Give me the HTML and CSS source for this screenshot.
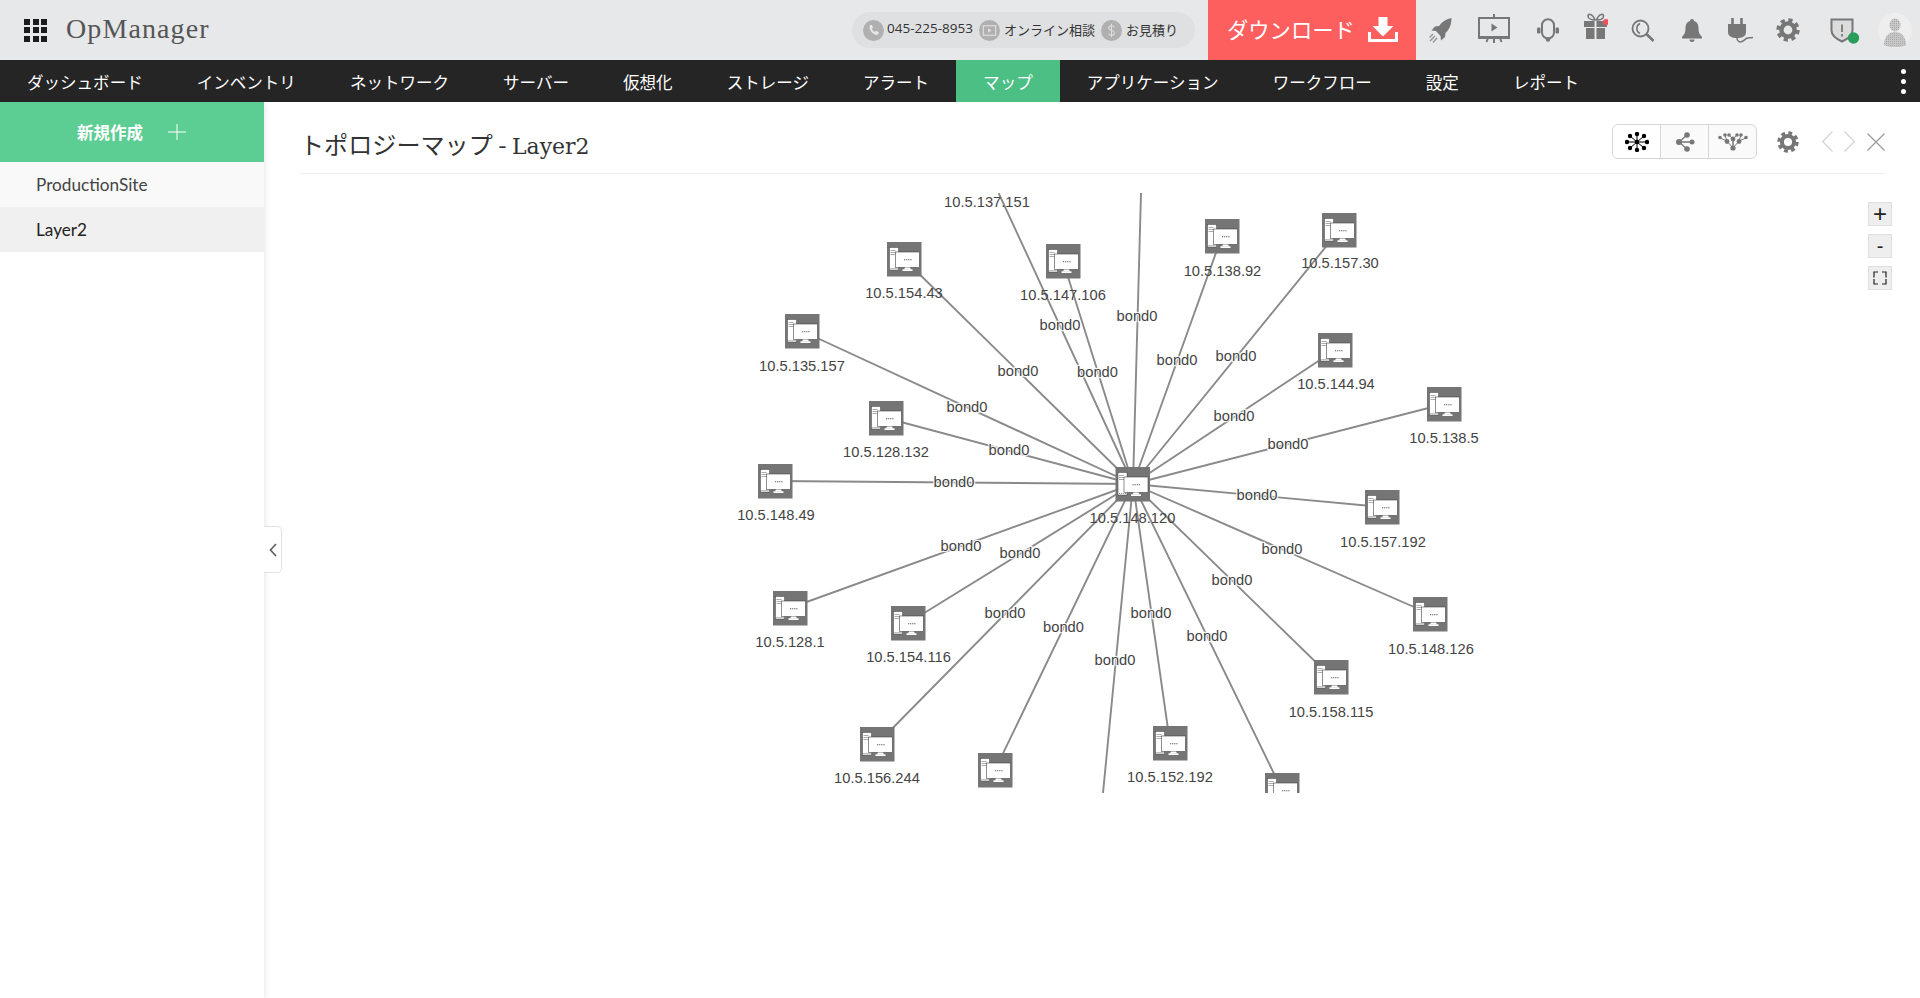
FILE: index.html
```html
<!DOCTYPE html>
<html lang="ja">
<head>
<meta charset="utf-8">
<title>OpManager</title>
<link rel="stylesheet" href="styles.css">
</head>
<body>
<svg class="defs" width="0" height="0" aria-hidden="true">
  <defs>
    <g id="node">
      <rect width="34.5" height="34.5" fill="#757575"/>
      <rect x="2.5" y="5.5" width="9" height="22.5" fill="#fff" stroke="#444" stroke-width=".5"/>
      <path d="M3.5 8.5h5M3.5 10.5h5M3.5 12.5h5" stroke="#888" stroke-width=".7"/>
      <path d="M3.5 26.5h7" stroke="#666" stroke-width=".8" stroke-dasharray="1 1"/>
      <rect x="8.5" y="10" width="24" height="15.5" fill="#fff" stroke="#444" stroke-width=".6"/>
      <path d="M18 25.5h5l1 2h-7z" fill="#fff"/>
      <rect x="15.5" y="27.3" width="10" height="1.7" fill="#fff"/>
      <path d="M17 17.7h7.5" stroke="#555" stroke-width="1.1" stroke-dasharray="1.2 .9"/>
    </g>
    <g id="gear">
      <circle cx="12" cy="12" r="6.6" fill="none" stroke="currentColor" stroke-width="4.4"/>
      <circle cx="12" cy="12" r="9.9" fill="none" stroke="currentColor" stroke-width="3.6" stroke-dasharray="4.2 3.58"/>
    </g>
  </defs>
</svg>

<header class="topbar">
  <div class="brand">
    <div class="apps"><i></i><i></i><i></i><i></i><i></i><i></i><i></i><i></i><i></i></div>
    <span class="logo">OpManager</span>
  </div>
  <div class="contact">
    <span class="contact-item">
      <svg class="contact-ic" viewBox="0 0 22 22"><circle cx="11" cy="11" r="11" fill="#b0b0b0"/><path d="M7 5.5l2.2-.6 1.4 3-1.3 1.2c.6 1.5 1.8 2.8 3.3 3.4l1.2-1.2 2.8 1.5-.7 2.2c-.4.7-1.2 1-2 .8-3.5-.9-6.3-3.7-7-7.4-.2-.9 0-1.7.1-2.4z" fill="#e6e6e6"/></svg>
      <span class="contact-text num">045-225-8953</span>
    </span>
    <span class="contact-item">
      <svg class="contact-ic" viewBox="0 0 22 22"><circle cx="11" cy="11" r="11" fill="#b0b0b0"/><rect x="4.5" y="6" width="13" height="10" fill="none" stroke="#e0e0e0" stroke-width="1.2"/><path d="M9.5 8.7l3.5 2.3-3.5 2.3z" fill="#e0e0e0"/></svg>
      <span class="contact-text">オンライン相談</span>
    </span>
    <span class="contact-item">
      <svg class="contact-ic" viewBox="0 0 22 22"><circle cx="11" cy="11" r="11" fill="#b0b0b0"/><path d="M14 7.5c-.6-1-1.7-1.4-3-1.4-1.6 0-2.9.8-2.900 2.400 0 3.200 6 1.800 6 5 0 1.600-1.400 2.400-3.100 2.400-1.400 0-2.600-.5-3.200-1.600M11 4v14" fill="none" stroke="#e0e0e0" stroke-width="1.1"/></svg>
      <span class="contact-text">お見積り</span>
    </span>
  </div>
  <a class="download">
    <span class="download-text">ダウンロード</span>
    <svg class="download-ic" viewBox="0 0 30 25"><path d="M10.5 0h9v9h6L15 19.5 4.5 9h6z" fill="#fff"/><path d="M1.5 15v8.5h27V15" fill="none" stroke="#fff" stroke-width="3"/></svg>
  </a>
  <div class="tools">
    <svg class="i-rocket" viewBox="0 0 23 25"><path d="M22.5 0c-5 1-9.500 3.500-12.500 8L6 8.500 2.500 12.500l4.500.5 4.500 5 .5 4.500 4-3.500.5-4c4-3.500 6-9 6-15z" fill="#777"/><path d="M1 23l5-5M4 24.500l4-4.500M.5 19.500l3.500-3.500" stroke="#999" stroke-width="1.5"/></svg>
    <svg class="i-screen" viewBox="0 0 32 29"><path d="M16 0v4" stroke="#777" stroke-width="2"/><rect x="1" y="4" width="30" height="19" fill="none" stroke="#777" stroke-width="2"/><path d="M0 24h32M10 24l-1.500 4M16 24v5M22 24l1.500 4" stroke="#777" stroke-width="2"/><path d="M13.5 9.500l6 4-6 4z" fill="#777"/></svg>
    <svg class="i-headset" viewBox="0 0 22 24"><rect x="5" y="1.2" width="12" height="19.3" rx="6" fill="none" stroke="#777" stroke-width="2"/><rect x="0" y="9.500" width="3.500" height="6" rx="1.2" fill="#777"/><rect x="18.500" y="9.500" width="3.500" height="6" rx="1.2" fill="#777"/><circle cx="11" cy="21.500" r="2.200" fill="#777"/></svg>
    <svg class="i-gift" viewBox="0 0 24 26"><path d="M11 7C8 7 4 6 4 3c0-3 5-2 7 4zM12.5 7c3 0 7-1 7-4 0-3-5-2-7 4z" fill="none" stroke="#777" stroke-width="1.6"/><rect x="0" y="8" width="23" height="6" fill="#777"/><rect x="2" y="15" width="19" height="11" fill="#777"/><path d="M11.5 8v18" stroke="#e6e8ea" stroke-width="2"/><circle cx="22" cy="9" r="3" fill="#f0505a"/></svg>
    <svg class="i-search" viewBox="0 0 24 23"><circle cx="9.5" cy="9.500" r="8" fill="none" stroke="#777" stroke-width="1.8"/><path d="M9 4.500a5.500 5.500 0 0 0 0 10" fill="none" stroke="#777" stroke-width="1.5"/><path d="M15.5 15l7 7" stroke="#777" stroke-width="2.6"/></svg>
    <svg class="i-bell" viewBox="0 0 20 23"><path d="M10 0c1.200 0 2 .8 2 2 3.500 1 4.500 4 4.500 7.500 0 3.500 1 6 3.500 8.500v1.500H0V18c2.500-2.500 3.500-5 3.500-8.500C3.500 6 4.500 3 8 2c0-1.200.8-2 2-2z" fill="#777"/><path d="M7.5 20.500h5a2.500 2.500 0 0 1-5 0z" fill="#777"/></svg>
    <svg class="i-plug" viewBox="0 0 25 25"><path d="M4.5 0v6M13.500 0v6" stroke="#777" stroke-width="2.6"/><path d="M0 6h18v8c0 4-3.500 6-9 6s-9-2-9-6z" fill="#777"/><path d="M9 20c0 3.500 2.500 4.500 5 3.500s3.500-3 5.500-3.500 3.500-.2 5.500-.5" fill="none" stroke="#777" stroke-width="1.5"/></svg>
    <svg class="i-gear" viewBox="0 0 24 24"><use href="#gear"/></svg>
    <svg class="i-shield" viewBox="0 0 30 27"><path d="M1.5 1.500h21v11c0 5-4 8-10.500 11C5.500 20.500 1.500 17.500 1.500 12.500z" fill="#dcdcdc" stroke="#777" stroke-width="2"/><path d="M12 6.500v7.500M12 16v2.500" stroke="#666" stroke-width="1.5"/><circle cx="23.5" cy="20" r="5.7" fill="#2a9d5c"/></svg>
    <svg class="i-avatar" viewBox="0 0 34 34"><defs><pattern id="dots" width="2" height="2" patternUnits="userSpaceOnUse"><rect width="2" height="2" fill="#c8c8c8"/><rect width="1" height="1" fill="#a8a8a8"/></pattern></defs><circle cx="17" cy="17" r="17" fill="#eeeeee"/><ellipse cx="17" cy="12" rx="5.5" ry="6.5" fill="url(#dots)"/><path d="M6 32c0-9 5-13 11-13s11 4 11 13c-6 3-16 3-22 0z" fill="url(#dots)"/></svg>
  </div>
</header>

<nav class="navbar">
  <a class="nav-item">ダッシュボード</a>
  <a class="nav-item">インベントリ</a>
  <a class="nav-item">ネットワーク</a>
  <a class="nav-item">サーバー</a>
  <a class="nav-item">仮想化</a>
  <a class="nav-item">ストレージ</a>
  <a class="nav-item">アラート</a>
  <a class="nav-item active">マップ</a>
  <a class="nav-item">アプリケーション</a>
  <a class="nav-item">ワークフロー</a>
  <a class="nav-item">設定</a>
  <a class="nav-item">レポート</a>
  <span class="kebab"><i></i><i></i><i></i></span>
</nav>

<div class="body">
  <aside class="sidebar">
    <div class="new-btn">
      <span>新規作成</span>
      <svg class="plus" viewBox="0 0 18 16"><path d="M9 0v16M0 8h18" stroke="#fff" stroke-width="1"/></svg>
    </div>
    <div class="side-item">ProductionSite</div>
    <div class="side-item selected">Layer2</div>
  </aside>

  <main class="main">
    <button class="collapse" aria-label="collapse">
      <svg viewBox="0 0 8 14" width="8" height="14"><path d="M7 1L1.5 7 7 13" fill="none" stroke="#666" stroke-width="1.8"/></svg>
    </button>

    <div class="titlerow">
      <h1 class="title"><span class="title-ja">トポロジーマップ - </span><span class="title-en">Layer2</span></h1>
      <div class="viewgroup">
        <span class="view">
          <svg viewBox="0 0 24 20" width="24" height="20"><path d="M12 10L12 2M12 10L5 4M12 10L19 4M12 10L5 16M12 10L19 16M12 10L2 10M12 10L22 10M12 10L12 18" stroke="#000" stroke-width="1"/><g fill="#000"><circle cx="12" cy="2" r="2.2"/><circle cx="12" cy="18" r="2.2"/><circle cx="5" cy="4" r="2.2"/><circle cx="19" cy="4" r="2.2"/><circle cx="5" cy="16" r="2.2"/><circle cx="19" cy="16" r="2.2"/><circle cx="2" cy="10" r="2.2"/><circle cx="22" cy="10" r="2.2"/><circle cx="12" cy="10" r="2.2"/></g></svg>
        </span>
        <span class="view">
          <svg viewBox="0 0 20 20" width="20" height="20"><path d="M4 10L12 3M4 10H17M4 10L12 17" stroke="#777" stroke-width="1.3"/><g fill="#777"><circle cx="4" cy="10" r="3"/><circle cx="12" cy="3" r="2.8"/><circle cx="17" cy="10" r="2.5"/><circle cx="12" cy="17" r="2.8"/></g></svg>
        </span>
        <span class="view">
          <svg viewBox="0 0 30 20" width="30" height="20"><path d="M15 16L9 9 2 6M15 16V7L11 3M15 16V7l4-4M15 16l6-7 7-3M9 9L7 3M21 9l2-6" stroke="#777" stroke-width="1" fill="none"/><g fill="#777"><circle cx="15" cy="16" r="2.6"/><circle cx="9" cy="9.5" r="2.4"/><circle cx="15" cy="7" r="2.4"/><circle cx="21" cy="9.5" r="2.4"/><circle cx="2" cy="5.5" r="1.8"/><circle cx="7" cy="3" r="1.8"/><circle cx="11" cy="3" r="1.8"/><circle cx="19" cy="3" r="1.8"/><circle cx="23" cy="3" r="1.8"/><circle cx="28" cy="5.5" r="1.8"/></g></svg>
        </span>
      </div>
      <svg class="set" viewBox="0 0 24 24"><use href="#gear"/></svg>
      <svg class="prev" viewBox="0 0 11 21"><path d="M10.5 .5L.7 10.5l9.800 10" fill="none" stroke="#d4d4d4" stroke-width="1.2"/></svg>
      <svg class="next" viewBox="0 0 11 21"><path d="M.5 .5l9.800 10-9.800 10" fill="none" stroke="#d4d4d4" stroke-width="1.2"/></svg>
      <svg class="close" viewBox="0 0 18 18"><path d="M.5 .5l17 17M17.5 .5l-17 17" fill="none" stroke="#999" stroke-width="1.2"/></svg>
    </div>

    <div class="zoombar">
      <span class="zoom-btn zoom-plus">+</span>
      <span class="zoom-btn">-</span>
      <span class="zoom-btn"><svg viewBox="0 0 14 14" width="14" height="14"><path d="M5 1H1v5.5M9 1h4v5.5M5 13H1V8M9 13h4V8" fill="none" stroke="#222" stroke-width="1.2"/></svg></span>
    </div>

    <svg class="graph" viewBox="264 193 1656 600" width="1656" height="600">
      <path class="edges" d="M1133 484L998.6 193M1133 484L1141 193M1133 484L904 259M1133 484L1063 261M1133 484L1222 236M1133 484L1339.5 230M1133 484L1335 350M1133 484L1444 404M1133 484L1382 507M1133 484L1430 614M1133 484L1331 677M1133 484L1282 790M1133 484L1170 743M1133 484L1103 793M1133 484L995 770M1133 484L877 744M1133 484L908 623M1133 484L790 608M1133 484L775 481M1133 484L886 418M1133 484L802 331"/>
      <g class="edge-labels">
        <text x="1060" y="330">bond0</text>
        <text x="1137" y="321">bond0</text>
        <text x="1018" y="376">bond0</text>
        <text x="1097.5" y="377">bond0</text>
        <text x="1177" y="365">bond0</text>
        <text x="1236" y="361">bond0</text>
        <text x="967" y="412">bond0</text>
        <text x="1009" y="455">bond0</text>
        <text x="1234" y="421">bond0</text>
        <text x="1288" y="449">bond0</text>
        <text x="954" y="487">bond0</text>
        <text x="1257" y="500">bond0</text>
        <text x="961" y="551">bond0</text>
        <text x="1020" y="558">bond0</text>
        <text x="1282" y="554">bond0</text>
        <text x="1232" y="585">bond0</text>
        <text x="1005" y="618">bond0</text>
        <text x="1063.5" y="632">bond0</text>
        <text x="1151" y="618">bond0</text>
        <text x="1115" y="665">bond0</text>
        <text x="1207" y="641">bond0</text>
      </g>
      <use href="#node" x="1115.5" y="467"/>
      <use href="#node" x="887" y="242"/>
      <use href="#node" x="1046" y="244"/>
      <use href="#node" x="1205" y="219"/>
      <use href="#node" x="1322" y="213"/>
      <use href="#node" x="1318" y="333"/>
      <use href="#node" x="1427" y="387"/>
      <use href="#node" x="1365" y="490"/>
      <use href="#node" x="1413" y="597"/>
      <use href="#node" x="1314" y="660"/>
      <use href="#node" x="1265" y="773"/>
      <use href="#node" x="1153" y="726"/>
      <use href="#node" x="978" y="753"/>
      <use href="#node" x="860" y="727"/>
      <use href="#node" x="891" y="606"/>
      <use href="#node" x="773" y="591"/>
      <use href="#node" x="758" y="464"/>
      <use href="#node" x="869" y="401"/>
      <use href="#node" x="785" y="314"/>
      <g class="node-labels">
        <text x="987" y="207">10.5.137.151</text>
        <text x="904" y="298">10.5.154.43</text>
        <text x="1063" y="300">10.5.147.106</text>
        <text x="1222.5" y="276">10.5.138.92</text>
        <text x="1340" y="268">10.5.157.30</text>
        <text x="1336" y="389">10.5.144.94</text>
        <text x="1444" y="443">10.5.138.5</text>
        <text x="1383" y="547">10.5.157.192</text>
        <text x="1431" y="654">10.5.148.126</text>
        <text x="1331" y="717">10.5.158.115</text>
        <text x="1170" y="782">10.5.152.192</text>
        <text x="877" y="783">10.5.156.244</text>
        <text x="908.5" y="662">10.5.154.116</text>
        <text x="790" y="647">10.5.128.1</text>
        <text x="776" y="520">10.5.148.49</text>
        <text x="886" y="457">10.5.128.132</text>
        <text x="802" y="371">10.5.135.157</text>
        <text x="1132.5" y="522.5">10.5.148.120</text>
      </g>
    </svg>
  </main>
</div>
</body>
</html>
```
FILE: styles.css
```css
* { box-sizing: border-box; }
html, body { margin: 0; padding: 0; height: 100%; }
body {
  width: 1920px;
  height: 998px;
  overflow: hidden;
  background: #fff;
  color: #333;
  font-family: "Noto Sans CJK JP", "Noto Sans", sans-serif;
}
.defs { position: absolute; }

/* top bar */
.topbar {
  display: flex;
  align-items: stretch;
  height: 60px;
  background: #e6e8ea;
}
.brand {
  display: flex;
  align-items: center;
  width: 852px;
  padding-left: 24px;
}
.apps {
  display: grid;
  grid-template-columns: repeat(3, 6px);
  grid-auto-rows: 6px;
  gap: 2.5px;
  margin-right: 19px;
}
.apps i { background: #1c1c1c; }
.logo {
  margin-top: -2px;
  font-family: "Liberation Serif", serif;
  font-size: 28px;
  letter-spacing: 1.1px;
  color: #555;
}
.contact {
  display: flex;
  align-items: center;
  align-self: center;
  gap: 6px;
  width: 343px;
  height: 36px;
  margin-right: 13px;
  padding-left: 11px;
  border-radius: 18px;
  background: #dfe0e1;
  font-size: 13px;
  color: #333;
}
.contact-item { display: flex; align-items: center; gap: 4px; white-space: nowrap; }
.contact-ic { width: 21px; height: 21px; flex: none; }
.contact-text { margin-top: -2px; }
.num { font-family: "Open Sans", sans-serif; font-size: 13.5px; margin-left: -1px; margin-top: -4px; }
.download {
  display: flex;
  align-items: center;
  gap: 13px;
  width: 208px;
  padding-left: 19px;
  background: #fd5f5f;
  color: #fff;
  font-size: 21.3px;
}
.download-text { margin-top: -3px; }
.download-ic { width: 30px; height: 25px; margin-top: -2px; }
.tools {
  flex: 1;
  display: grid;
  grid-template-columns: 48px 60px 48px 48px 46px 52px 44px 52px 58px 46px;
  justify-items: center;
  align-items: center;
}
.i-rocket { width: 23px; height: 25px; }
.i-screen { width: 32px; height: 29px; margin-top: -4px; }
.i-headset { width: 22px; height: 24px; }
.i-gift { width: 24px; height: 26px; margin-top: -8px; }
.i-search { width: 24px; height: 23px; }
.i-bell { width: 20px; height: 23px; }
.i-plug { width: 25px; height: 25px; }
.i-gear { width: 24px; height: 24px; color: #777; }
.i-shield { width: 30px; height: 27px; margin: 2px 0 0 4px; }
.i-avatar { width: 34px; height: 34px; }

/* navigation */
.navbar {
  display: flex;
  align-items: stretch;
  height: 42px;
  background: #252525;
  color: #fff;
  font-size: 16.55px;
  line-height: 44px;
}
.nav-item { padding: 0 27px; white-space: nowrap; }
.nav-item.active { background: #4cbf85; }
.kebab {
  margin-left: auto;
  margin-right: 14px;
  display: flex;
  flex-direction: column;
  justify-content: center;
  gap: 5px;
}
.kebab i { width: 5px; height: 5px; border-radius: 50%; background: #fff; }

/* body */
.body { display: flex; height: 896px; }
.sidebar {
  width: 264px;
  flex: none;
  background: #fff;
  box-shadow: 1px 0 6px rgba(0, 0, 0, 0.1);
}
.new-btn {
  display: flex;
  align-items: center;
  justify-content: flex-start;
  gap: 25px;
  height: 60px;
  padding-left: 77px;
  background: #5ccd93;
  color: #fff;
  font-size: 16.5px;
  font-weight: 700;
}
.plus { width: 18px; height: 16px; }
.side-item {
  height: 45px;
  padding-left: 36px;
  line-height: 46px;
  font-family: Lato, sans-serif;
  font-size: 17.2px;
  color: #444;
  background: #f9f9fa;
}
.side-item.selected { background: #f0f0f0; color: #222; }

.main { position: relative; flex: 1; min-width: 0; }
.collapse {
  position: absolute;
  left: 0;
  top: 424px;
  display: flex;
  align-items: center;
  justify-content: center;
  width: 18px;
  height: 47px;
  padding: 0;
  background: #fff;
  border: 1px solid #e2e2e2;
  border-left: 0;
  border-radius: 0 5px 5px 0;
}

.titlerow {
  display: flex;
  align-items: center;
  height: 72px;
  margin: 0 35px 0 36px;
  padding: 8px 0 0 0;
  border-bottom: 1px solid #eeeeee;
}
.title {
  flex: 1;
  margin: 3px 0 0;
  font-weight: 400;
  font-size: 24.1px;
  color: #333;
  white-space: nowrap;
}
.title-ja { font-family: "Noto Sans CJK JP", sans-serif; }
.title-en { font-family: "DejaVu Serif", serif; font-size: 22px; }
.viewgroup {
  display: flex;
  width: 145px;
  height: 35px;
  border: 1px solid #d6d6d6;
  border-radius: 6px;
  overflow: hidden;
  background: #fafafa;
}
.view {
  flex: 1;
  display: flex;
  align-items: center;
  justify-content: center;
  border-left: 1px solid #d6d6d6;
}
.view:first-child { border-left: 0; background: #fff; }
.set { width: 22px; height: 22px; margin-left: 20px; color: #777; }
.prev { width: 11px; height: 21px; margin-left: 23px; }
.next { width: 11px; height: 21px; margin-left: 11px; }
.close { width: 18px; height: 18px; margin-left: 12px; }

.zoombar {
  position: absolute;
  top: 100px;
  right: 28px;
  display: flex;
  flex-direction: column;
  gap: 8px;
}
.zoom-btn {
  display: flex;
  align-items: center;
  justify-content: center;
  width: 24px;
  height: 24px;
  background: #eeeeee;
  border: 1px solid #e0e0e0;
  font-family: "Liberation Sans", sans-serif;
  font-size: 20px;
  line-height: 1;
  color: #222;
}
.zoom-plus { font-size: 24px; }

.graph { display: block; margin-top: 19px; }
.edges { fill: none; stroke: #8a8a8a; stroke-width: 1.9; }
.edge-labels text, .node-labels text {
  font-family: "Liberation Sans", Arial, sans-serif;
  font-size: 14.7px;
  fill: #444;
  text-anchor: middle;
}
.edge-labels text {
  stroke: #fff;
  stroke-width: 2.5px;
  stroke-opacity: .85;
  paint-order: stroke;
}
```
